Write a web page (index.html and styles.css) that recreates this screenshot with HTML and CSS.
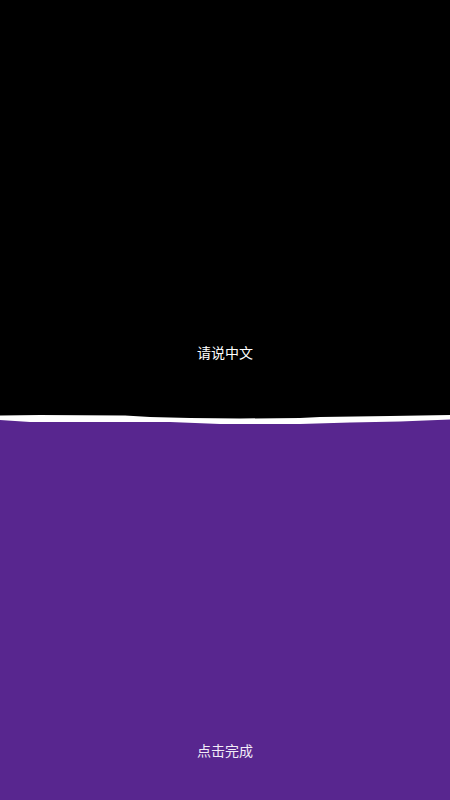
FILE: index.html
```html
<!DOCTYPE html>
<html lang="zh">
<head>
<meta charset="utf-8">
<link rel="stylesheet" href="styles.css">
</head>
<body>
<div class="screen">
  <section class="top">
    <p class="label">请说中文</p>
  </section>
  <svg class="divider" viewBox="0 0 450 14" preserveAspectRatio="none" xmlns="http://www.w3.org/2000/svg">
    <rect x="0" y="0" width="450" height="14" fill="#58268f"/>
    <polygon fill="#ffffff" points="0,0 450,0 450,7.5 400,9.5 350,10.5 300,12 220,12 170,10 150,10 30,10 0,8"/>
    <polygon fill="#000000" points="0,0 450,0 450,3 390,4 320,5 300,6 240,6.5 190,6 150,5 125,3.5 40,3 0,3.5"/>
  </svg>
  <section class="bottom">
    <p class="label label-done">点击完成</p>
  </section>
</div>
</body>
</html>
```

FILE: styles.css
```css
html, body {
  margin: 0;
  padding: 0;
  background: #58268f;
}
.screen {
  width: 450px;
  height: 800px;
  display: flex;
  flex-direction: column;
  font-family: "Noto Sans CJK SC", "Noto Sans", sans-serif;
}
.top {
  height: 412px;
  background: #000000;
  display: flex;
  flex-direction: column;
  justify-content: flex-end;
  align-items: center;
  padding-bottom: 50px;
  box-sizing: border-box;
}
.divider {
  display: block;
  width: 450px;
  height: 14px;
}
.bottom {
  flex: 1;
  background: #58268f;
  display: flex;
  flex-direction: column;
  justify-content: flex-end;
  align-items: center;
  padding-bottom: 40px;
  box-sizing: border-box;
}
.label {
  margin: 0;
  font-size: 14px;
  line-height: 20px;
  color: #ffffff;
}
.label-done {
  color: #f2ecf7;
}
```
